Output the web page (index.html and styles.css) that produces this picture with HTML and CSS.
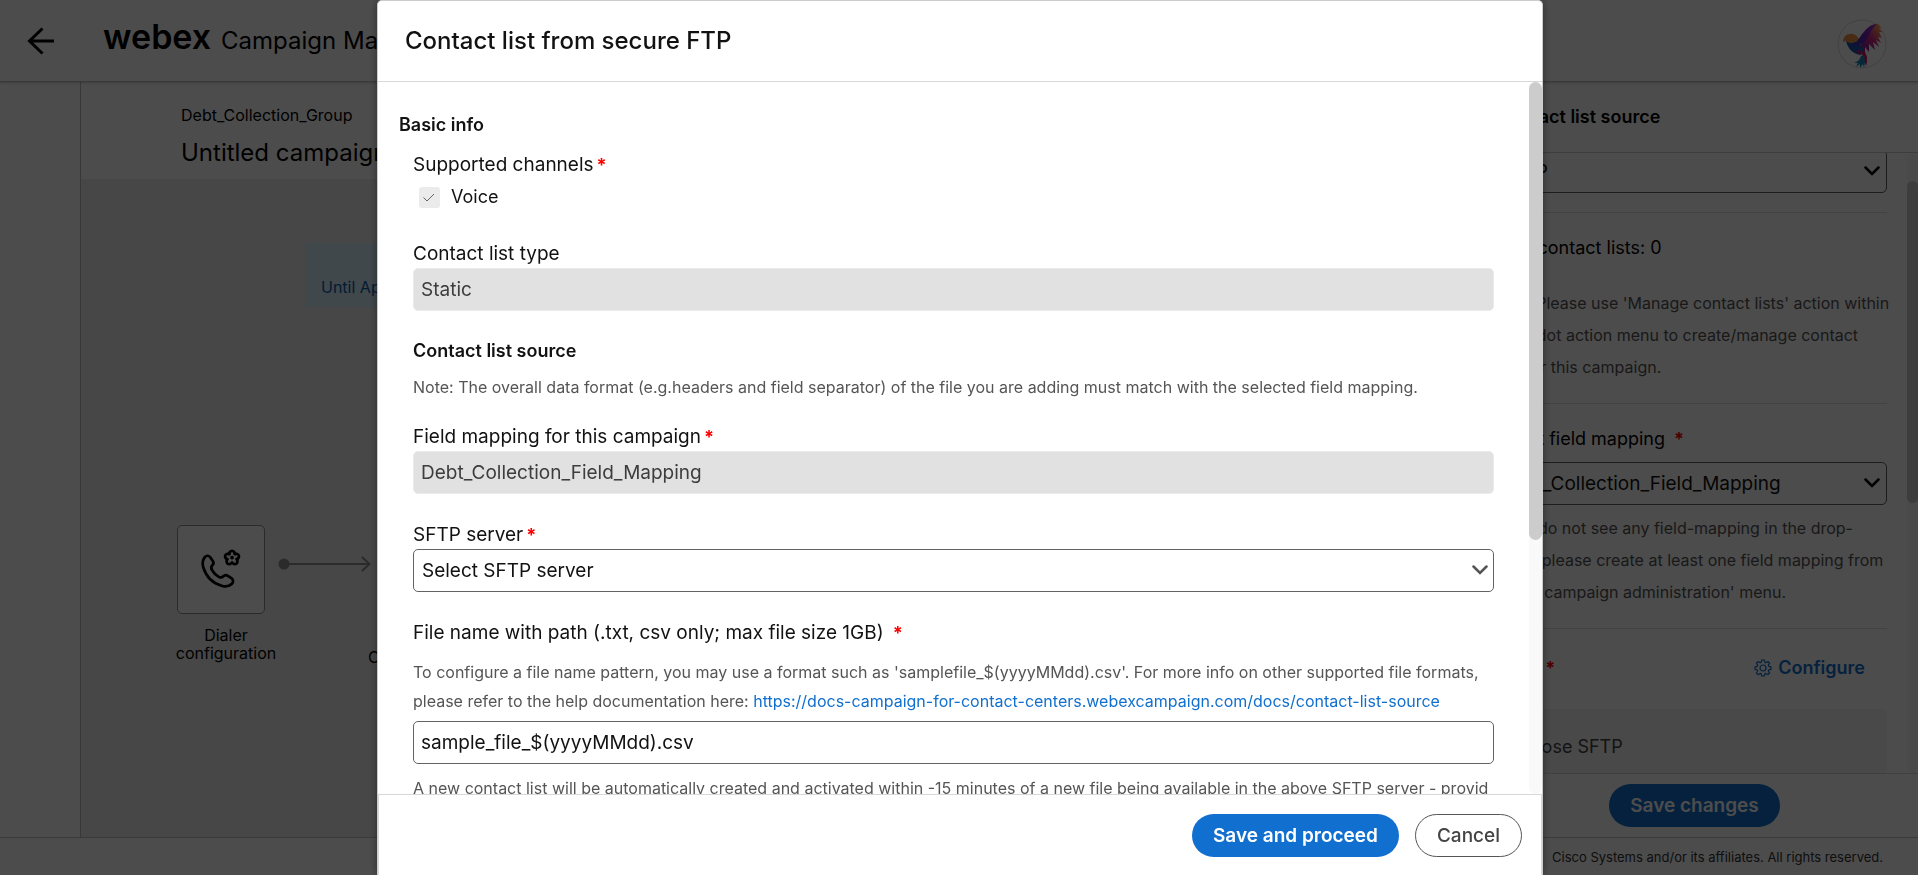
FILE: index.html
```html
<!DOCTYPE html>
<html lang="en">
<head>
<meta charset="utf-8">
<title>Webex Campaign Manager</title>
<link rel="stylesheet" href="styles.css">
</head>
<body>
<div class="app">
  <header class="topbar">
    <button class="back" type="button" aria-label="Back">
      <svg width="28" height="28" viewBox="0 0 28 28" fill="none" stroke="#000" stroke-width="3"><path d="M27 14H3M15.500 1.500L2.500 14l13 12.500"/></svg>
    </button>
    <div class="brand"><span class="brand-name">webex</span><span class="brand-product">Campaign Manager</span></div>
    <svg class="avatar" width="50" height="50" viewBox="0 0 50 50">
      <defs>
        <linearGradient id="wing" x1="0" y1="1" x2="1" y2="0"><stop offset="0" stop-color="#1a48b0"/><stop offset=".45" stop-color="#6a1fc0"/><stop offset="1" stop-color="#a030c0"/></linearGradient>
        <linearGradient id="plume" x1="0" y1="1" x2=".8" y2="0"><stop offset="0" stop-color="#5a1fb0"/><stop offset=".55" stop-color="#d02a80"/><stop offset="1" stop-color="#ffa050"/></linearGradient>
        <linearGradient id="tail" x1="0" y1="0" x2="0" y2="1"><stop offset="0" stop-color="#a01890"/><stop offset=".4" stop-color="#e01850"/><stop offset="1" stop-color="#d01060"/></linearGradient>
      </defs>
      <circle cx="25" cy="25" r="24" fill="#fff" stroke="#d8d8d8"/>
      <path d="M6 23c0-5 3-8 7-8 4-1 7 2 9 5l-6 10c-3-2-4-5-7-8z" fill="#f09048"/>
      <path d="M9 22c3 2 6 3 9 1l9 5-3 8c-8-1-13-6-15-14z" fill="#2050b0"/>
      <path d="M23 27L38 5c3-1 5 1 6 4l-2 0 3 4-3 0 3 6-4-1 3 6-5-3 3 7-6-5 2 8-6-6 0 8-4-5-3 4z" fill="url(#plume)"/>
      <path d="M14 26c6-2 8-7 12-12 4-5 8-9 14-9-5 4-6 8-9 13-3 5-7 8-13 10z" fill="url(#wing)"/>
      <path d="M19 33l9-6 0 6 2 5c0 4 0 6-1 9l-3-8-1-4c-2 0-4-1-6-2z" fill="url(#tail)"/>
      <path d="M24 37c-1 4-4 6-7 7l4 0-2 4 4-3 0 4 3-4 1 4 1-7-1-6z" fill="#1585c0"/>
      <path d="M21 29l2 5 1-4 2 4 1-7z" fill="#1c60c0"/>
    </svg>
  </header>

  <div class="workspace">
    <nav class="rail" aria-label="Main"></nav>
    <main class="stage">
      <div class="campaign-head">
        <div class="group-name">Debt_Collection_Group</div>
        <h1 class="campaign-name">Untitled campaign</h1>
      </div>
      <div class="canvas">
        <div class="schedule">Until Apr 30</div>
        <div class="node">
          <svg width="42" height="42" viewBox="0 0 40 40" fill="none" stroke="#000" stroke-width="2.600" stroke-linejoin="round" stroke-linecap="round">
            <path d="M4.600 7.800c1.500-2 4-1.700 5.300.2l2.300 3.400c1 1.500.7 3-.5 4.200-1.300 1.300-1.200 2.800-.3 4.400 1.500 2.700 3.800 5 6.500 6.500 1.600.9 3.100.8 4.300-.5 1.200-1.200 2.900-1.500 4.300-.5l3.400 2.300c1.900 1.300 2.200 3.800.4 5.400-2.400 2.200-5.400 3-9 2C11.600 32.600 5.500 25.700 3 17c-1-3.500-.3-6.700 1.600-9.200z"/>
            <path d="M30.500 1.700c1.700 0 2.700 1.500 2.500 3.200 1.700-.8 3.500-.2 4 1.400.5 1.600-.5 3-2.200 3.400 1.200 1.300 1.200 3.200-.1 4.200-1.400 1-3.200.4-4.200-1.100-1 1.500-2.800 2.100-4.200 1.100-1.300-1-1.300-2.900-.1-4.200-1.700-.4-2.700-1.800-2.200-3.400.5-1.600 2.300-2.200 4-1.400-.2-1.700.8-3.200 2.500-3.200z"/>
            <circle cx="30.500" cy="8.200" r="1" fill="#000" stroke-width="1.500"/>
          </svg>
        </div>
        <div class="node-label">Dialer configuration</div>
        <svg class="link" width="94" height="18" viewBox="0 0 94 18" fill="none" stroke="#8f8f8f" stroke-width="2"><circle cx="6" cy="9" r="5.500" fill="#8f8f8f" stroke="none"/><path d="M6 9h85M84 2l7.500 7-7.500 7"/></svg>
        <div class="next-label">Call</div>
      </div>
    </main>

    <aside class="panel">
      <h2 class="panel-title">Contact list source</h2>
      <div class="panel-scroll">
        <div class="panel-content">
          <div class="select-box panel-first"><select aria-label="Source type"><option>SFTP</option></select><svg class="chevron" width="16" height="10" viewBox="0 0 16 10"><path d="M1.500 1.500L8 8l6.500-6.500"/></svg></div>
          <hr>
          <p class="count">Total contact lists: 0</p>
          <p class="panel-hint fixed">Note: Please use 'Manage contact lists' action within<br>the 3-dot action menu to create/manage contact<br>lists for this campaign.</p>
          <hr>
          <label class="panel-label" for="panel-mapping">Select field mapping <span class="req near">*</span></label>
          <div class="select-box"><select id="panel-mapping"><option>Debt_Collection_Field_Mapping</option></select><svg class="chevron" width="16" height="10" viewBox="0 0 16 10"><path d="M1.500 1.500L8 8l6.500-6.500"/></svg></div>
          <p class="panel-hint lower">If you do not see any field-mapping in the drop-down, please create at least one field mapping from under 'campaign administration' menu.</p>
          <hr>
          <div class="configure-row">
            <span>SFTP<span class="req gap">*</span></span>
            <button class="configure" type="button"><svg width="18" height="18" viewBox="0 0 18 18" fill="none" stroke="#1170cf" stroke-width="1.200" stroke-linejoin="round"><path d="M7.700 1h2.600l.5 2.300 1.100.5 2-1.300 1.700 1.700-1.300 2 .5 1.100 2.200.5v2.600l-2.200.5-.5 1.100 1.300 2-1.700 1.700-2-1.300-1.100.5-.5 2.100H7.700l-.5-2.100-1.100-.5-2 1.300-1.700-1.700 1.300-2-.5-1.100L1 10.400V7.800l2.200-.5.5-1.100-1.300-2 1.700-1.700 2 1.300 1.100-.5z"/><circle cx="9" cy="9" r="3"/></svg>Configure</button>
          </div>
          <div class="purpose">Choose SFTP</div>
        </div>
        <div class="track"><div class="thumb panel-thumb"></div></div>
      </div>
      <div class="panel-actions"><button class="btn primary" type="button">Save changes</button></div>
    </aside>
  </div>
  <footer class="page-foot">Cisco Systems and/or its affiliates. All rights reserved.</footer>
</div>

<div class="backdrop">
  <section class="dialog" role="dialog" aria-modal="true" aria-labelledby="dialog-title">
    <h2 class="dialog-title" id="dialog-title">Contact list from secure FTP</h2>
    <div class="dialog-body">
      <form class="form" id="sftp-form">
        <h3 class="basic">Basic info</h3>
        <div class="fields">
          <div class="label">Supported channels<span class="req">*</span></div>
          <label class="check"><input type="checkbox" checked disabled><span>Voice</span></label>

          <label class="label type-label" for="list-type">Contact list type</label>
          <input class="text" id="list-type" type="text" value="Static" disabled>

          <h3 class="source">Contact list source</h3>
          <p class="note">Note: The overall data format (e.g.headers and field separator) of the file you are adding must match with the selected field mapping.</p>

          <label class="label mapping-label" for="mapping">Field mapping for this campaign<span class="req">*</span></label>
          <input class="text" id="mapping" type="text" value="Debt_Collection_Field_Mapping" disabled>

          <label class="label next" for="server">SFTP server<span class="req">*</span></label>
          <div class="select-box"><select id="server"><option>Select SFTP server</option></select><svg class="chevron soft" width="16" height="10" viewBox="0 0 16 10"><path d="M1.500 1.500L8 8l6.500-6.500"/></svg></div>

          <label class="label next" for="file-name">File name with path (.txt, csv only; max file size 1GB)<span class="req gap">*</span></label>
          <p class="hint">To configure a file name pattern, you may use a format such as 'samplefile_$(yyyyMMdd).csv'. For more info on other supported file formats, please refer to the help documentation here: <a href="https://docs-campaign-for-contact-centers.webexcampaign.com/docs/contact-list-source">https://docs-campaign-for-contact-centers.webexcampaign.com/docs/contact-list-source</a></p>
          <input class="text" id="file-name" type="text" value="sample_file_$(yyyyMMdd).csv">
          <p class="hint after">A new contact list will be automatically created and activated within -15 minutes of a new file being available in the above SFTP server - provid</p>
        </div>
      </form>
      <div class="track"><div class="thumb"></div></div>
    </div>
    <div class="dialog-actions">
      <button class="btn primary" type="submit" form="sftp-form">Save and proceed</button>
      <button class="btn outline" type="button">Cancel</button>
    </div>
  </section>
</div>
</body>
</html>
```

FILE: styles.css
```css
* { box-sizing: border-box; }
body, h1, h2, h3, p { margin: 0; }
body, button, input, select { font-family: Inter, "Liberation Sans", sans-serif; }
body { color: #121212; font-size: 18px; line-height: 24px; overflow: hidden; }
button { border: 0; background: none; padding: 0; cursor: pointer; }
h3 { font-size: 18px; font-weight: 600; line-height: 24px; }
hr { width: 100%; height: 1px; margin: 0; border: 0; background: #dedede; }

/* Application behind the dialog */
.app { display: flex; flex-direction: column; height: 100vh; background: #fff; color: #000; }
.topbar { position: relative; display: flex; align-items: center; flex: none; height: 82px; padding: 0 31px 0 27px; border-bottom: 1px solid #bdbdbd; box-shadow: 0 1px 3px rgba(0, 0, 0, .2); }
.back { display: flex; }
.brand { display: flex; align-items: baseline; gap: 10px; margin: 0 0 7px 48px; }
.brand-name { font-size: 34px; font-weight: 600; line-height: 40px; }
.brand-product { font-size: 24px; }
.avatar { margin: 7px 0 0 auto; }
.workspace { display: flex; flex: 1; min-height: 0; }
.rail { flex: none; width: 81px; border-right: 1px solid #bdbdbd; }
.stage { display: flex; flex: 1; flex-direction: column; min-width: 0; }
.campaign-head { padding: 21px 100px 10px; }
.group-name { font-size: 16px; line-height: 24px; }
.campaign-name { padding-top: 10px; font-size: 24px; font-weight: 400; line-height: 32px; }
.canvas { position: relative; flex: 1; background: #eee; }
.schedule { position: absolute; left: 224px; top: 64px; width: 200px; height: 64px; padding: 32px 16px 0; background: #d7f1fb; color: #0d5cb0; font-size: 16px; }
.node { position: absolute; left: 96px; top: 346px; display: grid; place-items: center; width: 88px; height: 89px; border: 1px solid #8f8f8f; border-radius: 5px; background: #fff; }
.node-label { position: absolute; left: 90px; top: 447px; width: 110px; font-size: 16px; line-height: 18px; text-align: center; }
.link { position: absolute; left: 197px; top: 376px; }
.next-label { position: absolute; left: 287px; top: 469px; font-size: 16px; line-height: 18px; }

.panel { display: flex; flex: none; flex-direction: column; width: 448px; border-left: 1px solid #ccc; }
.panel-title { flex: none; padding: 23px 26px; border-bottom: 1px solid #ccc; font-size: 18px; font-weight: 600; line-height: 24px; }
.panel-scroll { display: flex; flex: 1; min-height: 0; overflow: hidden; }
.panel-content { flex: 1; min-width: 0; padding: 0 20px; }
.panel-first { margin: -3px 0 19px; }
.count { padding: 23px 0 27px; }
.panel-hint { padding-bottom: 20px; color: #555; font-size: 16px; line-height: 32px; }
.panel-hint.fixed { white-space: nowrap; }
.panel-hint.lower { padding-top: 7px; }
.panel-label { display: block; padding: 23px 0 11px; }
.configure-row { display: flex; align-items: center; justify-content: space-between; padding: 27px 22px 29px 0; }
.configure { display: flex; align-items: center; gap: 6px; color: #1170cf; font-size: 18px; font-weight: 600; line-height: 24px; }
.purpose { height: 90px; padding: 26px 16px; border-radius: 6px; background: #f3f3f3; color: #444; }
.panel-actions { display: flex; flex: none; justify-content: center; padding: 10px; border-top: 1px solid #d8d8d8; }
.page-foot { flex: none; padding: 7px 35px 6px; border-top: 1px solid #c4c4c4; color: #333; font-size: 13px; line-height: 24px; text-align: right; }

/* Dialog */
.backdrop { position: fixed; inset: 0; display: flex; justify-content: center; padding-left: 2px; background: rgba(0, 0, 0, .7); }
.dialog { display: flex; flex-direction: column; width: 90%; max-width: 1166px; height: 100%; border: 1px solid #ccc; border-bottom: 0; border-radius: 5px 5px 0 0; background: #fff; box-shadow: 0 0 8px rgba(0, 0, 0, .4); overflow: hidden; }
.dialog-title { flex: none; padding: 24px 27px; border-bottom: 1px solid #d8d8d8; font-size: 24px; font-weight: 500; line-height: 32px; }
.dialog-body { display: flex; flex: 1; min-height: 0; overflow: hidden; }
.form { flex: 1; min-width: 0; padding: 31px 35px 0 21px; }
.fields { padding: 16px 0 0 14px; }
.label { display: block; width: fit-content; margin-bottom: 2px; font-size: 19px; }
.req { margin-left: 3px; color: #f00; font-size: 18px; font-weight: 700; }
.req.gap { margin-left: 9px; }
.req.near { margin-left: 4px; }
.check { display: flex; align-items: center; gap: 11px; width: fit-content; margin: 8px 0 0 6px; }
.check input { width: 21px; height: 21px; margin: 0; appearance: none; border-radius: 3px; background: #ebebeb url("data:image/svg+xml,%3Csvg xmlns='http://www.w3.org/2000/svg' width='21' height='21' fill='none' stroke='%23666'%3E%3Cpath d='M4.500 10.500L8 14l7-7'/%3E%3C/svg%3E"); }
.type-label { margin-top: 33px; }
.text, .select-box select { display: block; width: 100%; height: 43px; padding: 0 7px; border: 1px solid #636363; border-radius: 5px; background: #fff; color: #121212; font-size: 19px; }
.text:disabled { border-color: #ebebeb; background: #e1e1e1; color: #3d3d3d; }
.source { margin-top: 28px; }
.note { margin-top: 12px; color: #555; font-size: 16px; }
.mapping-label { margin-top: 26px; }
.next { margin-top: 29px; }
.select-box { position: relative; }
.select-box select { padding: 0 8px; appearance: none; }
.chevron { position: absolute; right: 7px; top: 16px; fill: none; stroke: #000; stroke-width: 2.500; stroke-linecap: round; pointer-events: none; }
.chevron.soft { right: 6px; stroke: #555; }
.hint { margin: 13px 0 5px; color: #555; font-size: 16px; line-height: 29px; }
.hint a { color: #1170cf; text-decoration: none; }
.hint.after { margin-top: 10px; white-space: nowrap; }
.track { flex: none; width: 13px; border-radius: 7px; background: #f9f9f9; }
.thumb { height: 64.300%; border-radius: 7px; background: #ccc; }
.panel-scroll .track { width: 11px; }
.panel-thumb { height: 52%; margin-top: 28px; background: #ccc; }
.dialog-actions { display: flex; flex: none; justify-content: flex-end; gap: 16px; padding: 19px 19px 18px; border: 1px solid #d8d8d8; border-bottom: 0; }
.btn { height: 43px; padding: 0 21px; border-radius: 22px; font-size: 19px; line-height: 24px; }
.primary { background: #1170cf; color: #fff; font-weight: 600; }
.outline { border: 1px solid #555; color: #444; font-weight: 500; }
```
